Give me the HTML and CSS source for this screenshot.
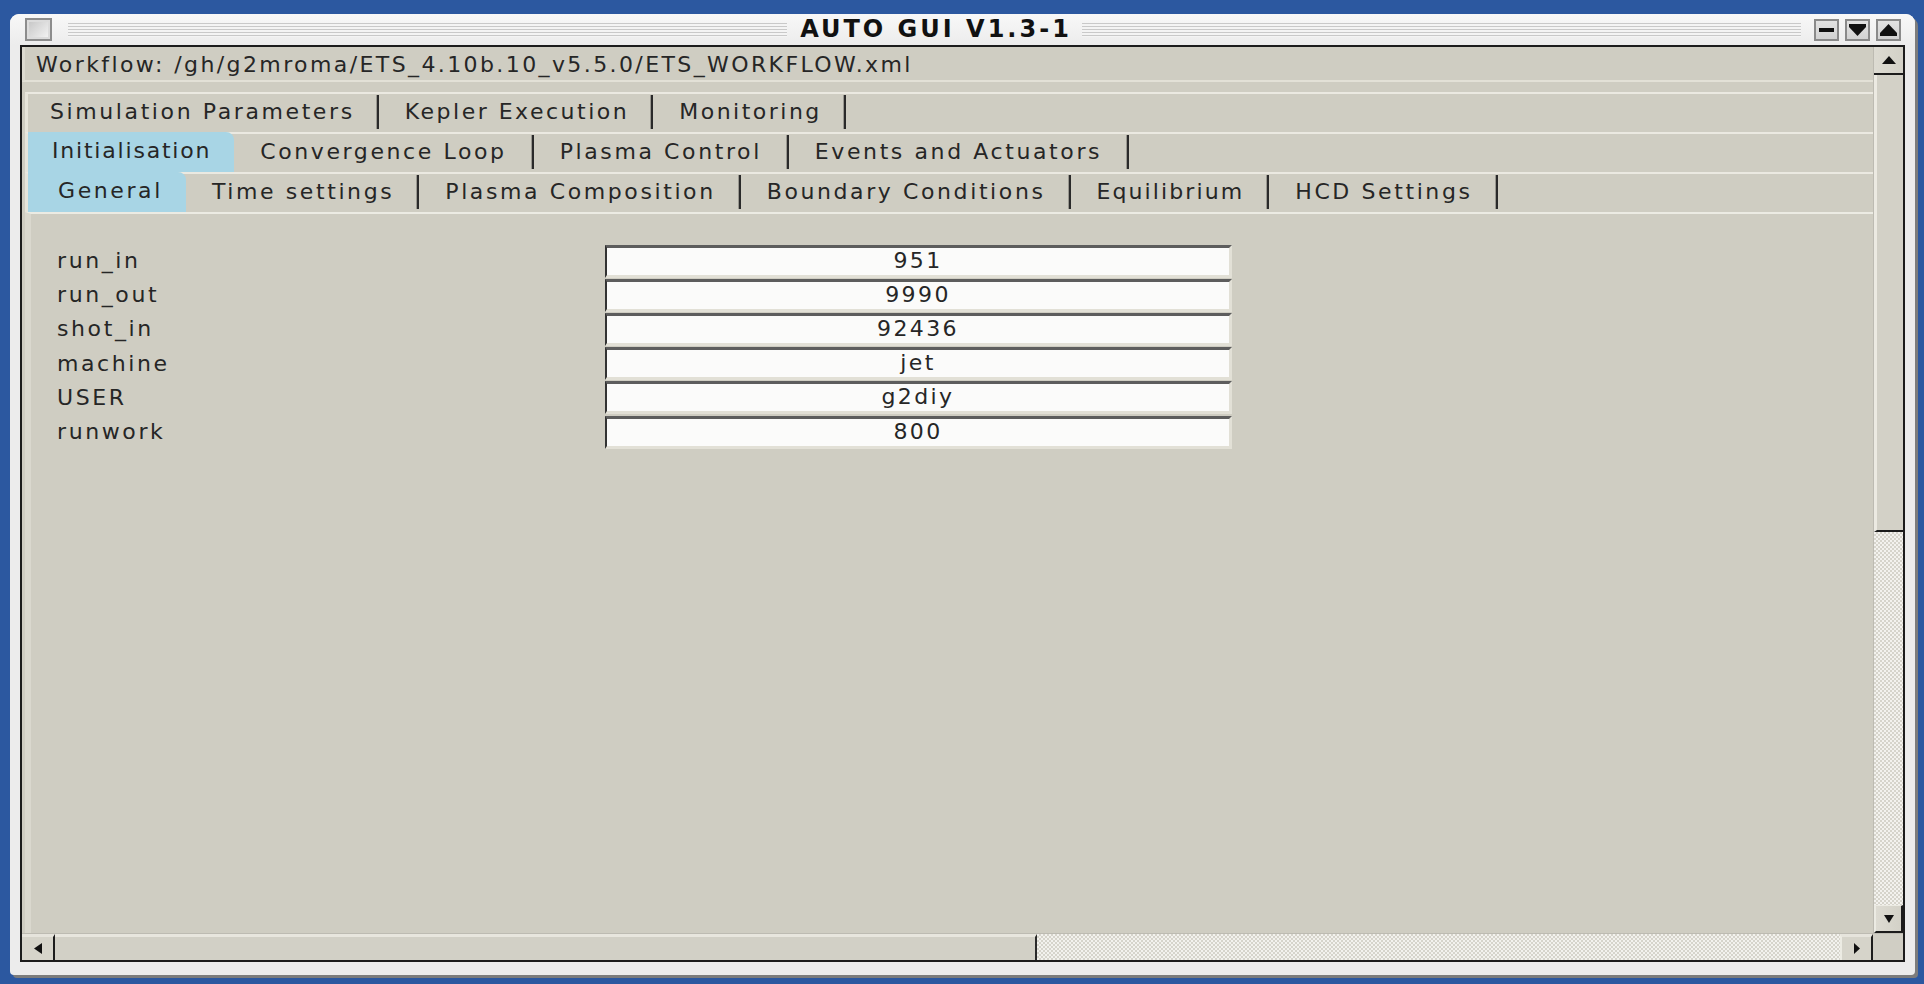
FILE: index.html
```html
<!DOCTYPE html>
<html>
<head>
<meta charset="utf-8">
<title>AUTO GUI V1.3-1</title>
<link rel="stylesheet" href="styles.css">
</head>
<body>
<div class="window">
  <div class="titlebar">
    <div class="close-box"><div class="close-inner"></div></div>
    <div class="stripes"></div>
    <div class="title">AUTO GUI V1.3-1</div>
    <div class="stripes"></div>
    <div class="wbtns">
      <div class="wbtn"><svg width="17" height="10" viewBox="0 0 17 10"><rect x="1" y="3" width="15" height="4" fill="#111"/></svg></div>
      <div class="wbtn"><svg width="17" height="12" viewBox="0 0 17 12"><rect x="0" y="0" width="17" height="3" fill="#111"/><polygon points="0,3 17,3 8.5,12" fill="#111"/></svg></div>
      <div class="wbtn"><svg width="17" height="12" viewBox="0 0 17 12"><polygon points="8.5,0 0,9 17,9" fill="#111"/><rect x="0" y="9" width="17" height="3" fill="#111"/></svg></div>
    </div>
  </div>
  <div class="frame">
    <div class="main">
      <div class="content">
        <div class="workflow">Workflow: /gh/g2mroma/ETS_4.10b.10_v5.5.0/ETS_WORKFLOW.xml</div>
        <div class="tabs">
          <div class="tabrow top">
            <div class="tab">Simulation Parameters</div>
            <div class="tab">Kepler Execution</div>
            <div class="tab">Monitoring</div>
          </div>
          <div class="tabrow mid">
            <div class="tab active">Initialisation</div>
            <div class="tab">Convergence Loop</div>
            <div class="tab">Plasma Control</div>
            <div class="tab">Events and Actuators</div>
          </div>
          <div class="tabrow low">
            <div class="tab active">General</div>
            <div class="tab">Time settings</div>
            <div class="tab">Plasma Composition</div>
            <div class="tab">Boundary Conditions</div>
            <div class="tab">Equilibrium</div>
            <div class="tab">HCD Settings</div>
          </div>
        </div>
        <div class="panel">
          <div class="form">
            <div class="label">run_in</div><div class="field">951</div>
            <div class="label">run_out</div><div class="field">9990</div>
            <div class="label">shot_in</div><div class="field">92436</div>
            <div class="label">machine</div><div class="field">jet</div>
            <div class="label">USER</div><div class="field">g2diy</div>
            <div class="label">runwork</div><div class="field">800</div>
          </div>
        </div>
      </div>
      <div class="vscroll">
        <div class="sbtn vbtn"><svg width="14" height="8" viewBox="0 0 14 8"><polygon points="7,0 0,8 14,8" fill="#111"/></svg></div>
        <div class="vthumb"></div>
        <div class="trough"></div>
        <div class="sbtn vbtn down"><svg width="10" height="8" viewBox="0 0 10 8"><polygon points="0,0 10,0 5,8" fill="#111"/></svg></div>
      </div>
    </div>
    <div class="hscroll">
      <div class="sbtn hbtn"><svg width="8" height="11" viewBox="0 0 8 11"><polygon points="0,5.5 8,0 8,11" fill="#111"/></svg></div>
      <div class="hthumb"></div>
      <div class="trough"></div>
      <div class="sbtn hbtn right"><svg width="6" height="11" viewBox="0 0 6 11"><polygon points="0,0 6,5.5 0,11" fill="#111"/></svg></div>
      <div class="corner"></div>
    </div>
  </div>
</div>
</body>
</html>
```
FILE: styles.css
```css
* { box-sizing: border-box; }
html, body {
  margin: 0;
  padding: 0;
  background: #2c58a0;
  width: 1924px;
  height: 984px;
  overflow: hidden;
}
body {
  font-family: "DejaVu Sans", Verdana, sans-serif;
  color: #262626;
  padding: 14px 0 0 10px;
}
.window {
  width: 1905px;
  height: 961px;
  background: #ececec;
  border-radius: 9px 9px 4px 4px;
  box-shadow: 3px 3px 0 #7c7c7c;
  display: flex;
  flex-direction: column;
  padding-bottom: 13px;
}
.titlebar {
  height: 31px;
  display: flex;
  align-items: center;
  background: linear-gradient(#f8f8f8, #ececec);
  border-radius: 9px 9px 0 0;
  padding: 0 14px 0 15px;
}
.close-box {
  width: 27px;
  height: 23px;
  border: 2px solid #8c8c8c;
  background: #dcdcdc;
  padding: 2px;
}
.close-inner {
  width: 100%;
  height: 100%;
  background: linear-gradient(135deg, #c8c8c8, #f2f2f2);
}
.stripes {
  flex: 1;
  height: 14px;
  margin: 0 13px 0 16px;
  background: repeating-linear-gradient(to bottom, #c9c9c9 0 1px, #f4f4f4 1px 3px);
}
.stripes + .title + .stripes { margin: 0 13px 0 10px; }
.title {
  font-weight: bold;
  font-size: 24px;
  letter-spacing: 3px;
  color: #111;
  line-height: 31px;
}
.wbtns { display: flex; gap: 6px; }
.wbtn {
  width: 25px;
  height: 22px;
  border: 2px solid #8a8a8a;
  background: linear-gradient(#e2e2e2, #d2d2d2);
  display: flex;
  align-items: center;
  justify-content: center;
}
.frame {
  flex: 1;
  margin: 0 10px;
  border: 2px solid #1c1c1c;
  display: flex;
  flex-direction: column;
  background: #cfcdc2;
  min-height: 0;
}
.main {
  flex: 1;
  display: flex;
  min-height: 0;
}
.content {
  flex: 1;
  display: flex;
  flex-direction: column;
  min-width: 0;
}
.workflow {
  height: 35px;
  line-height: 35px;
  padding-left: 11px;
  font-size: 22px;
  letter-spacing: 2.4px;
  white-space: nowrap;
  border-bottom: 2px solid #e3e1d7;
  border-left: 3px solid #dcdad0;
}
.tabs {
  margin-top: 10px;
  padding-left: 3px;
  display: flex;
  flex-direction: column;
}
.tabrow {
  height: 40px;
  display: flex;
  border-top: 2px solid #ebe9e1;
  border-left: 3px solid #e6e4da;
}
.tab {
  font-size: 22px;
  letter-spacing: 2.6px;
  white-space: nowrap;
  line-height: 36px;
  padding: 0 27px 0 26px;
  position: relative;
}
.tabrow.top .tab { padding: 0 24px 0 26px; letter-spacing: 2.5px; }
.tabrow.top .tab:first-child { padding-left: 22px; letter-spacing: 2.6px; }
.tabrow.low .tab { padding: 0 25px 0 26px; }
.tab::after {
  content: "";
  position: absolute;
  right: 0;
  top: 1px;
  bottom: 3px;
  width: 2px;
  background: #2a2a2a;
  box-shadow: -1px 0 0 #9a9890;
}
.tab.active {
  background: #a8d5e5;
  border-radius: 0 8px 0 0;
  margin-top: -2px;
  line-height: 38px;
}
.tab.active::after { display: none; }
.tabrow.mid .tab.active { padding: 0 23px 0 24px; letter-spacing: 1.8px; }
.tabrow.low .tab.active { padding: 0 23px 0 30px; letter-spacing: 2.6px; }
.tabrow.low .tab:nth-child(5) { letter-spacing: 2.1px; }
.panel {
  flex: 1;
  border-top: 2px solid #ecebe3;
  border-left: 6px solid #dad8ce;
  margin-left: 3px;
  padding: 30px 0 0 26px;
}
.form {
  display: grid;
  grid-template-columns: 548px 627px;
  grid-auto-rows: 34.2px;
  align-items: center;
}
.label {
  font-size: 22px;
  letter-spacing: 2.6px;
  line-height: 34px;
}
.field {
  height: 33px;
  background: #fbfbfa;
  border-top: 3px solid #5d5d5d;
  border-left: 2px solid #333;
  border-bottom: 3px solid #e2e0d6;
  border-right: 3px solid #e2e0d6;
  text-align: center;
  font-size: 22px;
  letter-spacing: 2.4px;
  line-height: 26px;
}
.vscroll {
  width: 30px;
  display: flex;
  flex-direction: column;
  border-left: 1px solid #bdbbb2;
}
.sbtn {
  background: #d6d4ca;
  display: flex;
  align-items: center;
  justify-content: center;
}
.vbtn {
  height: 28px;
  border-bottom: 2px solid #1c1c1c;
  background: linear-gradient(90deg, #dddbd2, #d3d1c7);
}
.vbtn.down {
  border-top: 1px solid #ecebe3;
  border-left: 2px solid #ecebe3;
  border-right: 2px solid #1c1c1c;
  border-bottom: 2px solid #1c1c1c;
}
.vthumb {
  height: 457px;
  border-left: 3px solid #eceae2;
  border-bottom: 2px solid #1c1c1c;
  background: #d3d1c7;
}
.trough {
  flex: 1;
  background-color: #eeede8;
  background-image: repeating-conic-gradient(#d6d4cb 0 25%, #f3f2ee 0 50%);
  background-size: 4px 4px;
}
.hscroll {
  height: 27px;
  display: flex;
  border-top: 1px solid #bdbbb2;
}
.hbtn {
  width: 33px;
  border-right: 2px solid #1c1c1c;
  border-top: 3px solid #e6e4dc;
}
.hbtn.right {
  width: 33px;
  border-left: 2px solid #ecebe3;
}
.hthumb {
  width: 982px;
  border-top: 3px solid #e8e6de;
  border-right: 2px solid #2a2a2a;
  background: #d2d0c6;
}
.corner {
  width: 30px;
  background: #d0cec4;
}
```
